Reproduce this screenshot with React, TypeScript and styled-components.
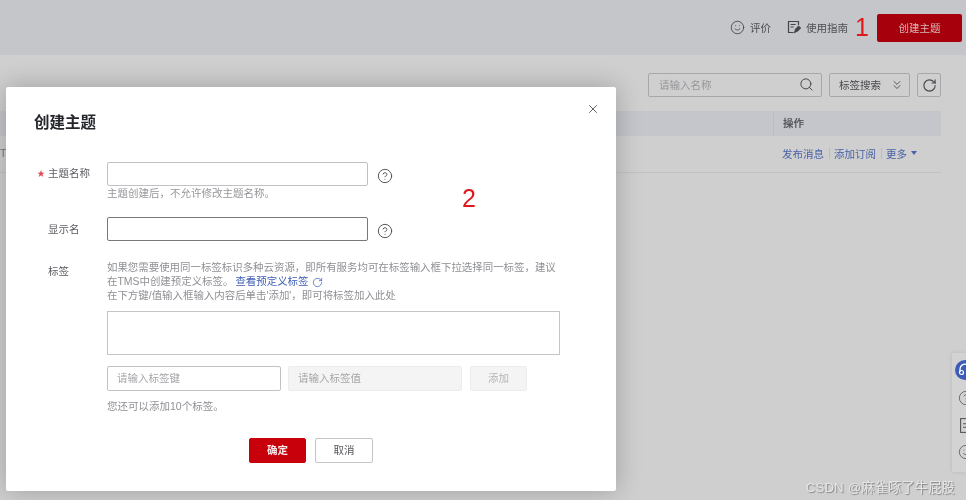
import React from 'react';
import styled, { createGlobalStyle } from 'styled-components';
import { ChevronsDown, CircleHelp, RotateCw, Search, Smile, X } from 'lucide-react';

const GlobalStyle = createGlobalStyle`
  html, body {
    margin: 0;
    padding: 0;
    background: #cfcfcf;
  }
  * {
    box-sizing: border-box;
  }
`;

const Page = styled.div`
  position: relative;
  width: 966px;
  height: 500px;
  overflow: hidden;
  background: #cfcfcf;
  font-family: 'Liberation Sans', 'Noto Sans CJK SC', sans-serif;
  font-size: 10.5px;
  color: #4f4f4f;
  filter: blur(0.3px);
`;

const TopBar = styled.header`
  display: flex;
  justify-content: flex-end;
  align-items: center;
  height: 55px;
  padding: 0 4px 0 0;
  background: #c5c6ca;
`;

const TopLink = styled.span<{ $gap: number }>`
  display: flex;
  align-items: center;
  gap: 5px;
  margin-right: ${props => props.$gap}px;
  padding-bottom: 1px;
  color: #4d4e52;
  font-size: 10.5px;
  svg {
    flex: none;
    color: #45464a;
  }
`;

const StepMark = styled.span`
  color: #e0181c;
  font-size: 25px;
  font-weight: 400;
  line-height: 1;
  margin-right: 8px;
`;

const CreateBtn = styled.button`
  width: 85px;
  height: 28px;
  margin-top: 1px;
  border: none;
  border-radius: 2px;
  background: #a5000c;
  color: #d8b9bb;
  font-family: inherit;
  font-size: 10.5px;
  padding: 0 0 2px;
`;

const Content = styled.main`
  padding: 18px 25px 0 0;
`;

const Toolbar = styled.div`
  display: flex;
  justify-content: flex-end;
  gap: 7px;
  height: 24px;
`;

const SearchBox = styled.div`
  display: flex;
  align-items: center;
  justify-content: space-between;
  width: 174px;
  height: 24px;
  padding: 0 7px 1px 10px;
  border: 1px solid #a7a8ab;
  border-radius: 2px;
  color: #96979a;
  svg {
    color: #3f4043;
  }
`;

const ToolButton = styled.div<{ $width: number }>`
  display: flex;
  align-items: center;
  justify-content: space-between;
  width: ${props => props.$width}px;
  height: 24px;
  padding: 0 5px 1px 9px;
  border: 1px solid #a7a8ab;
  border-radius: 2px;
  color: #47484b;
  svg {
    color: #47484b;
  }
`;

const RefreshButton = styled(ToolButton)`
  justify-content: center;
  padding: 0;
`;

const TableHead = styled.div`
  display: flex;
  justify-content: flex-end;
  height: 25px;
  margin-top: 14px;
  background: #c4c6cb;
`;

const HeadCell = styled.div`
  display: flex;
  align-items: center;
  width: 168px;
  padding: 0 0 3px 9px;
  border-left: 1px solid #bcbdc2;
  color: #48494c;
  font-weight: 400;
  -webkit-text-stroke: 0.2px #48494c;
`;

const TableRow = styled.div`
  display: flex;
  justify-content: space-between;
  align-items: center;
  height: 37px;
  padding-bottom: 2px;
  border-bottom: 1px solid #c3c3c3;
`;

const EdgeText = styled.span`
  font-size: 10.5px;
  color: #77787a;
`;

const RowActions = styled.div`
  display: flex;
  align-items: center;
  width: 159px;
  color: #4a62a8;
`;

const ActionDivider = styled.i`
  width: 1px;
  height: 11px;
  margin: 0 4.5px;
  background: #bbbcc0;
`;

const Caret = styled.i`
  width: 0;
  height: 0;
  margin-left: 4px;
  border-left: 3.5px solid transparent;
  border-right: 3.5px solid transparent;
  border-top: 4px solid #4a62a8;
`;

const Modal = styled.section`
  position: absolute;
  left: 6px;
  top: 87px;
  width: 610px;
  height: 404px;
  padding: 25px 56px 0 28px;
  background: #fff;
  border-radius: 2px;
  box-shadow: 0 0 26px rgba(0, 0, 0, 0.24);
`;

const CloseBtn = styled.span`
  position: absolute;
  top: 15px;
  right: 16px;
  display: flex;
  color: #4a4b4f;
`;

const Title = styled.h2`
  margin: 0;
  height: 22px;
  color: #25262b;
  font-size: 15.5px;
  font-weight: 700;
  line-height: 22px;
`;

const FormRow = styled.div<{ $top: number }>`
  display: grid;
  grid-template-columns: 73px 1fr;
  margin-top: ${props => props.$top}px;
`;

const Label = styled.label<{ $offset: number }>`
  position: relative;
  padding: ${props => props.$offset}px 0 0 14px;
  color: #5b5c60;
  font-size: 10.5px;
  line-height: 14px;
`;

const Star = styled.span`
  position: absolute;
  left: 3px;
  top: 5px;
  color: #dc4a52;
  font-size: 8px;
  line-height: 14px;
`;

const InputLine = styled.div`
  display: flex;
  align-items: center;
  gap: 9px;
  svg {
    margin-top: 4px;
    color: #4a4b4f;
  }
`;

const TextInput = styled.div<{ $dark?: boolean; $disabled?: boolean; $width: number }>`
  display: flex;
  align-items: center;
  width: ${props => props.$width}px;
  height: ${props => (props.$width < 200 ? 25 : 24)}px;
  padding: 0 0 2px 9px;
  border: 1px solid ${props => (props.$dark ? '#77787c' : props.$disabled ? '#ececec' : '#c2c2c4')};
  border-radius: 2px;
  background: ${props => (props.$disabled ? '#f4f4f4' : '#fff')};
  color: #a4a5a8;
`;

const Hint = styled.div`
  margin-top: 0;
  color: #96979b;
  font-size: 10.5px;
  line-height: 14px;
`;

const TagNote = styled.div`
  width: 460px;
  margin-top: 1px;
  color: #8f9094;
  font-size: 10.45px;
  line-height: 14px;
`;

const NoteLink = styled.span`
  display: inline-flex;
  align-items: center;
  gap: 4px;
  margin-left: 2px;
  color: #3d5cb4;
  svg {
    color: #3d5cb4;
  }
`;

const TagBox = styled.div`
  width: 453px;
  height: 44px;
  margin-top: 8px;
  border: 1px solid #c4c4c6;
`;

const TagInputs = styled.div`
  display: flex;
  gap: 7px;
  margin-top: 11px;
`;

const AddBtn = styled.div`
  display: flex;
  align-items: center;
  justify-content: center;
  width: 57px;
  height: 25px;
  margin-left: 1px;
  padding-bottom: 2px;
  border: 1px solid #ececec;
  border-radius: 2px;
  background: #f4f4f4;
  color: #b4b5b7;
`;

const Remaining = styled.div`
  margin-top: 8px;
  color: #8f9094;
  line-height: 14px;
`;

const Footer = styled.div`
  display: flex;
  gap: 9px;
  margin: 25px 0 0 215px;
`;

const FooterBtn = styled.button<{ $primary?: boolean }>`
  width: ${props => (props.$primary ? 57 : 58)}px;
  height: 25px;
  padding: 0 0 2px;
  border: 1px solid ${props => (props.$primary ? '#c7000b' : '#c4c4c6')};
  border-radius: 2px;
  background: ${props => (props.$primary ? '#c7000b' : '#fff')};
  color: ${props => (props.$primary ? '#fbe9ea' : '#55565a')};
  font-family: inherit;
  font-size: 10.5px;
  font-weight: ${props => (props.$primary ? 700 : 400)};
`;

const FloatMark = styled.span`
  position: absolute;
  left: 456px;
  top: 97px;
  color: #e0181c;
  font-size: 25px;
  line-height: 28px;
`;

const SidePanel = styled.aside`
  position: absolute;
  left: 952px;
  top: 353px;
  display: flex;
  flex-direction: column;
  align-items: flex-start;
  width: 14px;
  height: 119px;
  padding: 7px 0 0 3px;
  overflow: hidden;
  background: #d3d3d3;
  box-shadow: 0 0 4px rgba(0, 0, 0, 0.1);
`;

const SideIcon = styled.div<{ $top: number; $left: number }>`
  flex: none;
  margin: ${props => props.$top}px 0 0 ${props => props.$left}px;
  color: #55565a;
  line-height: 0;
`;

const Watermark = styled.div`
  position: absolute;
  right: 11px;
  bottom: 3px;
  color: #e6e6e6;
  font-size: 13.2px;
  letter-spacing: 0.2px;
  line-height: 18px;
  text-shadow: 1px 1px 1px #858585;
`;

const GuideIcon = () => (
  <svg width="14" height="14" viewBox="0 0 14 14" fill="none" stroke="currentColor" strokeWidth="1.2">
    <path d="M11.5 5V1.5h-10v11h5" />
    <path d="M3.6 4.5h5M3.6 7h3" />
    <path d="M7.6 12.4l1-3 3-3 1.8 1.6-3 3z" fill="currentColor" />
  </svg>
);

const HeadsetIcon = () => (
  <svg width="20" height="20" viewBox="0 0 20 20" fill="none">
    <circle cx="10" cy="10" r="10" fill="#3d5cb8" />
    <path d="M5 12V9a5 5 0 0 1 7-4.5" stroke="#fff" strokeWidth="1.3" />
    <circle cx="6.5" cy="12.5" r="2" stroke="#fff" strokeWidth="1.2" />
  </svg>
);

const DocIcon = () => (
  <svg width="16" height="15" viewBox="0 0 16 15" fill="none" stroke="currentColor" strokeWidth="1.1">
    <rect x="0.6" y="0.6" width="14.8" height="13.8" />
    <path d="M3 5.8h5M3 9.2h5" />
  </svg>
);

const App: React.FC = () => (
  <Page>
    <GlobalStyle />
    <TopBar>
      <TopLink $gap={16}>
        <Smile size={15} strokeWidth={1.4} />
        评价
      </TopLink>
      <TopLink $gap={7}>
        <GuideIcon />
        使用指南
      </TopLink>
      <StepMark>1</StepMark>
      <CreateBtn>创建主题</CreateBtn>
    </TopBar>
    <Content>
      <Toolbar>
        <SearchBox>
          请输入名称
          <Search size={15} strokeWidth={1.5} />
        </SearchBox>
        <ToolButton $width={81}>
          标签搜索
          <ChevronsDown size={14} strokeWidth={1.5} />
        </ToolButton>
        <RefreshButton $width={24}>
          <RotateCw size={15} strokeWidth={1.8} />
        </RefreshButton>
      </Toolbar>
      <TableHead>
        <HeadCell>操作</HeadCell>
      </TableHead>
      <TableRow>
        <EdgeText>T</EdgeText>
        <RowActions>
          发布消息
          <ActionDivider />
          添加订阅
          <ActionDivider />
          更多
          <Caret />
        </RowActions>
      </TableRow>
    </Content>
    <Modal>
      <CloseBtn>
        <X size={14} strokeWidth={1.5} />
      </CloseBtn>
      <Title>创建主题</Title>
      <FormRow $top={28}>
        <Label $offset={4}>
          <Star>★</Star>
          主题名称
        </Label>
        <div>
          <InputLine>
            <TextInput $width={261} />
            <CircleHelp size={16} strokeWidth={1.4} />
          </InputLine>
          <Hint>主题创建后，不允许修改主题名称。</Hint>
        </div>
      </FormRow>
      <FormRow $top={17}>
        <Label $offset={5}>显示名</Label>
        <InputLine>
          <TextInput $width={261} $dark />
          <CircleHelp size={16} strokeWidth={1.4} />
        </InputLine>
      </FormRow>
      <FormRow $top={19}>
        <Label $offset={4}>标签</Label>
        <div>
          <TagNote>
            如果您需要使用同一标签标识多种云资源，即所有服务均可在标签输入框下拉选择同一标签，建议
            <br />
            在TMS中创建预定义标签。
            <NoteLink>
              查看预定义标签
              <RotateCw size={11} strokeWidth={1.6} />
            </NoteLink>
            <br />
            在下方键/值输入框输入内容后单击'添加'，即可将标签加入此处
          </TagNote>
          <TagBox />
          <TagInputs>
            <TextInput $width={174}>请输入标签键</TextInput>
            <TextInput $width={174} $disabled>
              请输入标签值
            </TextInput>
            <AddBtn>添加</AddBtn>
          </TagInputs>
          <Remaining>您还可以添加10个标签。</Remaining>
        </div>
      </FormRow>
      <Footer>
        <FooterBtn $primary>确定</FooterBtn>
        <FooterBtn>取消</FooterBtn>
      </Footer>
      <FloatMark>2</FloatMark>
    </Modal>
    <SidePanel>
      <SideIcon $top={0} $left={0}>
        <HeadsetIcon />
      </SideIcon>
      <SideIcon $top={10} $left={3}>
        <CircleHelp size={16} strokeWidth={1.2} />
      </SideIcon>
      <SideIcon $top={12} $left={5}>
        <DocIcon />
      </SideIcon>
      <SideIcon $top={11} $left={3}>
        <Smile size={16} strokeWidth={1.2} />
      </SideIcon>
    </SidePanel>
    <Watermark>CSDN @麻雀啄了牛屁股</Watermark>
  </Page>
);

export default App;
